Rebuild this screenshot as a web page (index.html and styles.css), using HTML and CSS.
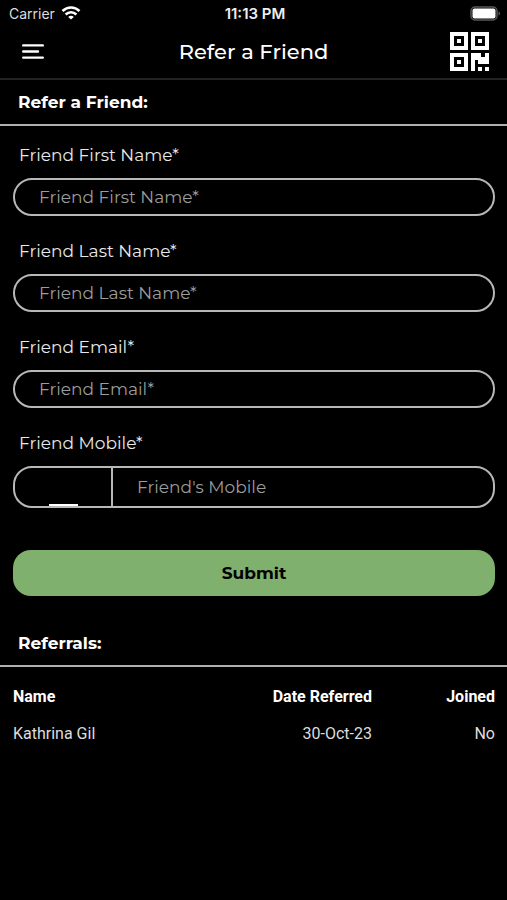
FILE: index.html
```
<!DOCTYPE html>
<html lang="en">
<head>
    <meta charset="UTF-8">
    <meta name="viewport" content="width=device-width, initial-scale=1.0">
    <title>Refer a Friend</title>
    <link rel="stylesheet" href="styles.css">
</head>
<body>

    <!-- Status bar -->
    <div class="status-bar">
        <div class="carrier">
            <span>Carrier</span>
            <svg width="20" height="14" viewBox="0 0 20 14" fill="none" stroke="#fff" stroke-width="2.6" aria-hidden="true">
                <path d="M1.500 5C6.500.3 13.500.3 18.500 5"/>
                <path d="M4.600 8.500c3.200-2.900 7.600-2.900 10.800 0"/>
                <path d="M10 13.600 7.200 10.900c1.600-1.500 4-1.500 5.600 0z" fill="#fff" stroke="none"/>
            </svg>
        </div>
        <div class="clock">11:13 PM</div>
        <svg class="battery" width="31" height="15" viewBox="0 0 31 15" aria-hidden="true">
            <rect x="1" y="1" width="26" height="13" rx="4" fill="none" stroke="#58585a" stroke-width="1.500"/>
            <rect x="2.500" y="2.500" width="23" height="10" rx="2" fill="#fff"/>
            <path d="M28.500 5.500c2 .6 2 3.400 0 4z" fill="#58585a"/>
        </svg>
    </div>

    <!-- Header -->
    <header class="header">
        <button class="icon-button menu" type="button" aria-label="Menu">
            <svg width="22" height="17" viewBox="0 0 22 17" stroke="#fff" stroke-width="2.400" stroke-linecap="round">
                <path d="M1.200 2.400h19.600M1.200 8.500h14.800M1.200 14.600h19.600"/>
            </svg>
        </button>
        <h1>Refer a Friend</h1>
        <button class="icon-button qr" type="button" aria-label="QR code">
            <svg width="39" height="39" viewBox="0 0 39 39" fill="#fff">
                <path fill-rule="evenodd" d="M0 0h18v18H0zM4 4v10h10V4z"/>
                <path fill-rule="evenodd" d="M21 0h18v18H21zM25 4v10h10V4z"/>
                <path fill-rule="evenodd" d="M0 21h18v18H0zM4 25v10h10V25z"/>
                <path d="M7 7h4v4H7zM28 7h4v4h-4zM7 28h4v4H7z"/>
                <path d="M21 21h10v4h4v-4h4v11H28v-4h-3v11h-4z"/>
                <path d="M28 35h4v4h-4zM35 35h4v4h-4z"/>
            </svg>
        </button>
    </header>

    <main>
        <h2>Refer a Friend:</h2>

        <!-- Referral form -->
        <form class="refer-form">
            <label for="firstName">Friend First Name*</label>
            <input class="field" type="text" id="firstName" placeholder="Friend First Name*" required>

            <label for="lastName">Friend Last Name*</label>
            <input class="field" type="text" id="lastName" placeholder="Friend Last Name*" required>

            <label for="email">Friend Email*</label>
            <input class="field" type="email" id="email" placeholder="Friend Email*" required>

            <label for="mobile">Friend Mobile*</label>
            <div class="mobile-field">
                <div class="country-code">
                    <input type="text" id="countryCode" aria-label="Country code">
                </div>
                <input class="mobile-number" type="tel" id="mobile" placeholder="Friend's Mobile" required>
            </div>

            <button class="submit" type="submit">Submit</button>
        </form>

        <h2>Referrals:</h2>

        <!-- Referrals list -->
        <div class="referrals">
            <table>
                <thead>
                    <tr>
                        <th>Name</th>
                        <th>Date Referred</th>
                        <th>Joined</th>
                    </tr>
                </thead>
                <tbody>
                    <tr>
                        <td>Kathrina Gil</td>
                        <td>30-Oct-23</td>
                        <td>No</td>
                    </tr>
                </tbody>
            </table>
        </div>
    </main>

</body>
</html>
```
FILE: styles.css
```
* {
    box-sizing: border-box;
}

body {
    margin: 0;
    min-height: 100vh;
    background: #000;
    color: #fff;
    font-family: Montserrat, Inter, sans-serif;
    font-size: 17px;
}

input, button {
    font-family: inherit;
    font-size: inherit;
    color: inherit;
}

/* Status bar */
.status-bar {
    display: grid;
    grid-template-columns: 1fr auto 1fr;
    align-items: center;
    height: 26px;
    padding: 0 6px 0 9px;
    font-family: Inter, sans-serif;
    font-size: 14px;
}

.carrier {
    display: flex;
    align-items: center;
    gap: 6px;
    color: #ddd;
}

.clock {
    font-size: 15px;
    font-weight: 600;
    color: #eee;
}

.battery {
    justify-self: end;
}

/* Header */
.header {
    display: grid;
    grid-template-columns: 1fr auto 1fr;
    align-items: center;
    height: 54px;
    padding: 0 18px 2px;
    border-bottom: 2px solid #232323;
}

.header h1 {
    margin: 0;
    font-size: 21px;
    font-weight: 500;
}

.icon-button {
    display: flex;
    padding: 0;
    border: none;
    background: none;
    cursor: pointer;
}

.menu {
    justify-self: start;
    padding: 4px;
}

.qr {
    justify-self: end;
}

/* Section titles */
h2 {
    margin: 0;
    padding: 10px 18px;
    border-bottom: 2px solid #b0b0b0;
    font-size: 17px;
    line-height: 24px;
    font-weight: 700;
}

/* Form */
.refer-form {
    display: flex;
    flex-direction: column;
    padding: 17px 12px 25px 13px;
}

.refer-form label {
    padding-left: 6px;
    margin-bottom: 11px;
    line-height: 24px;
    color: #e8e8e8;
}

.field {
    height: 38px;
    margin: 0 0 23px;
    padding: 0 24px;
    border: 2px solid #b8b8b8;
    border-radius: 19px;
    background: #000;
}

.refer-form input::placeholder {
    color: #9c9c9c;
    opacity: 1;
}

.mobile-field {
    display: flex;
    height: 42px;
    margin-bottom: 42px;
    border: 2px solid #b8b8b8;
    border-radius: 19px;
    overflow: hidden;
}

.country-code {
    display: flex;
    justify-content: center;
    width: 98px;
    border-right: 2px solid #b8b8b8;
}

.country-code input {
    width: 29px;
    padding: 0;
    border: none;
    border-bottom: 2px solid #fff;
    background: none;
    text-align: center;
}

.mobile-number {
    flex: 1;
    min-width: 0;
    padding: 0 24px;
    border: none;
    background: none;
}

.submit {
    height: 46px;
    border: none;
    border-radius: 18px;
    background: #80b06d;
    color: #000;
    font-weight: 700;
    cursor: pointer;
}

/* Referrals list */
.referrals {
    padding: 11px 12px 11px 13px;
    font-family: Roboto, sans-serif;
    font-size: 16px;
}

.referrals table {
    width: 100%;
    border-collapse: collapse;
    table-layout: fixed;
}

.referrals th,
.referrals td {
    height: 37px;
    padding: 0;
    text-align: right;
}

.referrals td {
    color: #ddd;
}

.referrals th:first-child,
.referrals td:first-child {
    width: 40%;
    text-align: left;
}

.referrals th:last-child,
.referrals td:last-child {
    width: 123px;
}
```
